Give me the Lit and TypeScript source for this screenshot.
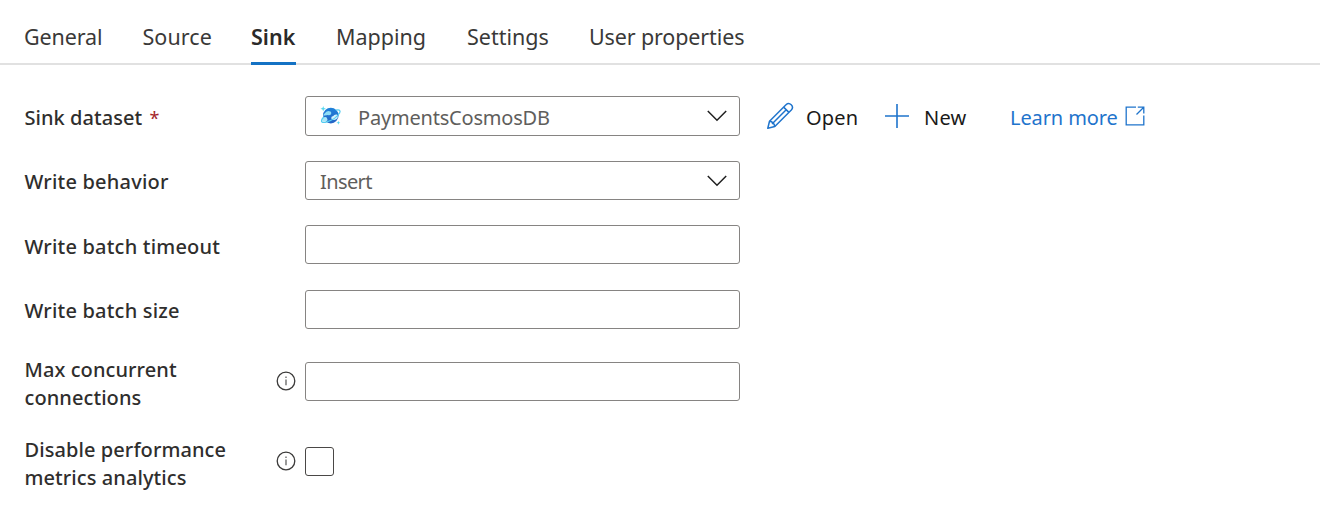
import { LitElement, html, css, nothing } from "lit";
import { customElement, property } from "lit/decorators.js";
import { classMap } from "lit/directives/class-map.js";

const chevron = html`<svg class="chevron" width="20" height="12" viewBox="0 0 20 12" fill="none" stroke="#1f1f1f" stroke-width="1.5"><path d="M.8 1 10 10.2 19.2 1" /></svg>`;

const cosmos = html`<svg class="cosmos" width="22" height="20" viewBox="0 0 22 20">
  <defs><linearGradient id="g" x1="0" y1="0" x2="0" y2="1"><stop offset="0" stop-color="#1f82da" /><stop offset="1" stop-color="#2563c4" /></linearGradient></defs>
  <circle cx="10.8" cy="9.6" r="7.8" fill="url(#g)" />
  <path d="M4.6 7.6Q6.3 4.6 9.4 5.2 11.8 5.6 11.1 7.9 10.3 9.5 7.8 9.1L3.2 9.8Q3.4 8.6 4.6 7.6Z" fill="#8edcf6" />
  <path d="M2.4 12.6Q2.7 10.6 4.7 11.2 6.9 10.6 7.3 13 8.4 14.6 6.4 15.2L3.2 15.6Q1.4 14.8 2.4 12.6Z" fill="#a8e6f8" />
  <path d="M11.2 12.2Q11 10.3 13.3 10.1 14 8.3 16.8 8.6 18.2 9.7 17.6 12 15.8 14 13.8 13.9 11.6 13.8 11.2 12.2Z" fill="#d4f3fc" />
  <path d="M15.8 4.2C19.4 3.2 20.9 4.4 19.6 7 17.6 10.6 11.8 14.4 7 15.9 3.2 17 .9 16.4 1.6 14.1 2 12.9 2.9 11.9 3.8 11" fill="none" stroke="#55cdf0" stroke-width="1.3" />
  <path d="M3.2 0 3.9 2.1 6 2.8 3.9 3.5 3.2 5.6 2.5 3.5.4 2.8 2.5 2.1Z" fill="#55d8ef" />
  <path d="M18.4 14.8 18.9 16.3 20.4 16.8 18.9 17.3 18.4 18.8 17.9 17.3 16.4 16.8 17.9 16.3Z" fill="#55d8ef" />
</svg>`;

const pencil = html`<svg width="28" height="28" viewBox="0 0 28 28" fill="none" stroke="#1f74cc" stroke-width="1.5" stroke-linejoin="round">
  <path d="M1.8 26.2 3.5 19.2 20 2.7A3.75 3.75 0 0 1 25.3 8L8.8 24.5Z" />
  <path d="M3.5 19.2Q7.9 19.8 8.8 24.5M17.6 5.1 22.9 10.4M20.2 7.8 6 22" />
</svg>`;

const plus = html`<svg class="plus" width="26" height="26" viewBox="0 0 26 26" fill="none" stroke="#1f74cc" stroke-width="1.6"><path d="M13 1V25M1 13H25" /></svg>`;

const external = html`<svg width="20" height="20" viewBox="0 0 20 20" fill="none" stroke="#1f74cc" stroke-width="1.3"><path d="M11 1.2H1.2V18.8H18.8V9.5M12.8 1.2H18.8V7.5M18.8 1.2 11.5 8.5" /></svg>`;

const info = html`<svg class="info" width="20" height="20" viewBox="0 0 20 20" fill="none" stroke="#3b3a39" stroke-width="1.3"><circle cx="10" cy="10" r="8.8" /><path d="M10 8.4V14.3M10 5.6V7" stroke="#555" stroke-width="1.2" /></svg>`;

@customElement("tab-strip")
class TabStrip extends LitElement {
  @property() selected = "Sink";
  static styles = css`
    :host { display: block; }
    .tabs { display: flex; gap: 40px; height: 65px; box-sizing: border-box; padding: 0 24px; background: linear-gradient(#e1e1e1, #e1e1e1) 0 63px / 100% 2px no-repeat; }
    .tab { box-sizing: border-box; height: 65px; padding-top: 22px; font-size: 21.5px; line-height: 30px; white-space: nowrap; color: #3a3938; border-bottom: 3px solid transparent; }
    .selected { font-weight: 600; color: #2b2a29; border-bottom-color: #1472c4; }
    .general { width: 78px; letter-spacing: -.12px; } .source { width: 69px; letter-spacing: .1px; text-indent: .4px; } .sink { width: 45px; } .mapping { width: 91px; } .settings { width: 82px; }
    .user { letter-spacing: -.13px; }
  `;
  render() {
    return html`<nav class="tabs">${["General", "Source", "Sink", "Mapping", "Settings", "User properties"].map(
      (t) => html`<div class=${classMap({ tab: true, [t.split(" ")[0].toLowerCase()]: true, selected: t === this.selected })}>${t}</div>`
    )}</nav>`;
  }
}

@customElement("app-root")
class AppRoot extends LitElement {
  static styles = css`
    :host { display: block; height: 524px; overflow: hidden; background: #fff; color: #2f2e2d; font-family: "Noto Sans", "Open Sans", sans-serif; font-size: 20px; }
    form { display: grid; padding: 31px 0 0 24px; }
    .row { display: grid; grid-template-columns: 251px 30px 435px auto; align-items: center; height: 39px; margin-bottom: 25px; }
    .first { height: 40px; }
    .batch { margin-bottom: 26px; }
    .size { margin-bottom: 27px; }
    .tall { height: 56px; margin-bottom: 24px; }
    .label { font-weight: 500; line-height: 28px; white-space: pre; padding: 2px 0 0 .5px; letter-spacing: .2px; }
    .first .label { letter-spacing: .05px; padding-top: 3px; }
    .batch .label { padding-top: 4px; }
    .tall .label { padding-top: 0; letter-spacing: .08px; }
    .star { color: #a4262c; font-weight: 400; font-size: 18px; margin-left: 2px; }
    .info { margin: 0 0 7px 1px; }
    .box { box-sizing: border-box; width: 435px; height: 39px; border: 1px solid #868482; border-radius: 3px; display: flex; align-items: center; padding: 0 12px 0 14px; color: #605e5c; line-height: 28px; }
    .first .box { height: 40px; }
    .tall .box { margin-bottom: 5px; }
    .cosmos { margin: 0 16px 1px 0; }
    .value { flex: 1; padding-top: 2px; letter-spacing: -.2px; }
    .first .value { padding-top: 4px; }
    .behavior .value { letter-spacing: -.6px; }
    .check { box-sizing: border-box; width: 29px; height: 29px; border: 1px solid #4a4846; border-radius: 3px; margin-bottom: 5px; }
    .actions { display: flex; align-items: center; padding-left: 26px; color: #1b1a19; line-height: 28px; }
    .actions span { padding-top: 3px; }
    .plus { margin-bottom: 1px; }
    .open { width: 52px; margin: 0 26px 0 12px; letter-spacing: .15px; }
    .new { width: 43px; margin: 0 43px 0 14px; letter-spacing: .2px; }
    .link { color: #1f74cc; width: 107px; margin-right: 8px; white-space: nowrap; letter-spacing: -.1px; }
    svg { display: block; flex: none; }
  `;
  private row(cls: string, label: unknown, control: unknown, hint = false, extra: unknown = nothing) {
    return html`<div class="row ${cls}"><div class="label">${label}</div><div>${hint ? info : nothing}</div>${control}${extra}</div>`;
  }
  render() {
    return html`<tab-strip></tab-strip>
      <form>
        ${this.row("first", html`Sink dataset <span class="star">*</span>`, html`<div class="box">${cosmos}<span class="value">PaymentsCosmosDB</span>${chevron}</div>`, false,
          html`<div class="actions">${pencil}<span class="open">Open</span>${plus}<span class="new">New</span><span class="link">Learn more</span>${external}</div>`)}
        ${this.row("behavior", "Write behavior", html`<div class="box"><span class="value">Insert</span>${chevron}</div>`)}
        ${this.row("batch", "Write batch timeout", html`<div class="box"></div>`)}
        ${this.row("size", "Write batch size", html`<div class="box"></div>`)}
        ${this.row("tall", "Max concurrent\nconnections", html`<div class="box"></div>`, true)}
        ${this.row("tall", "Disable performance\nmetrics analytics", html`<div class="check"></div>`, true)}
      </form>`;
  }
}
